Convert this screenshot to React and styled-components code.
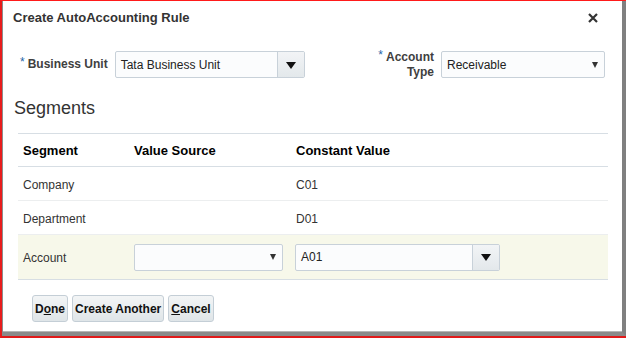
import React from "react";
import styled, { createGlobalStyle } from "styled-components";

const Global = createGlobalStyle`
  html, body { margin: 0; padding: 0; background: #fff; }
  body { font-family: "Liberation Sans", Arial, sans-serif; }
  * { box-sizing: border-box; }
`;

const Frame = styled.div`
  width: 626px;
  height: 338px;
  display: flex;
  border-top: 1px solid #ff1a1a;
  border-left: 2px solid #e81c1c;
  border-bottom: 2px solid #e01a1a;
`;

const Dialog = styled.div`
  flex: 1;
  display: flex;
  flex-direction: column;
  background: #fff;
  border-left: 1px solid #8c8c8c;
  border-right: 4px solid #808080;
  border-bottom: 4px solid #8a8a8a;
  box-shadow: inset 0 -1px 0 #b5b5b5;
  color: #333;
`;

const Header = styled.div`
  display: flex;
  align-items: center;
  justify-content: space-between;
  height: 33px;
  padding: 0 24px 0 10px;
`;

const Title = styled.div`
  font-size: 13px;
  font-weight: bold;
  color: #333;
`;

const Close = styled.svg`
  width: 10px;
  height: 10px;
  margin-top: 1px;
`;

const FormRow = styled.div`
  display: flex;
  justify-content: space-between;
  margin-top: 17px;
  padding: 0 17px 0 17px;
  height: 27px;
`;

const Field = styled.div`
  display: flex;
  align-items: center;
  gap: 7px;
`;

const Label = styled.div`
  display: flex;
  align-items: flex-start;
  font-size: 12px;
  font-weight: bold;
  color: #404040;
  text-align: right;
  line-height: 15px;
`;

const Star = styled.span`
  color: #1f65a8;
  font-size: 12px;
  font-weight: normal;
  margin-right: 3px;
  margin-top: -2px;
`;

const SelectBox = styled.div`
  display: flex;
  align-items: center;
  width: ${(p) => p.w}px;
  height: 27px;
  background: #fbfcfd;
  border: 1px solid #c8d1d9;
  border-radius: 2px;
  font-size: 12px;
  color: #222;
  overflow: hidden;
`;

const SelectText = styled.div`
  flex: 1;
  padding-left: 5px;
  white-space: nowrap;
`;

const SmallArrow = styled.div`
  width: 0;
  height: 0;
  border-left: 3px solid transparent;
  border-right: 3px solid transparent;
  border-top: 6px solid #333;
  margin-right: 6px;
`;

const DropButton = styled.div`
  width: 27px;
  height: 100%;
  display: flex;
  align-items: center;
  justify-content: center;
  border-left: 1px solid #c8d1d9;
  background: linear-gradient(#f2f4f6, #e3e8eb);
`;

const BigArrow = styled.div`
  width: 0;
  height: 0;
  border-left: 5px solid transparent;
  border-right: 5px solid transparent;
  border-top: 7px solid #111;
  margin-top: 1px;
`;

const Heading = styled.div`
  font-size: 18px;
  color: #333;
  margin: 20px 0 0 11px;
  line-height: 21px;
`;

const Table = styled.div`
  margin: 14px 0 0 15px;
  width: 590px;
`;

const Row = styled.div`
  display: grid;
  grid-template-columns: 111px 162px 1fr;
  align-items: center;
  height: ${(p) => p.h}px;
  border-top: 1px solid ${(p) => p.line};
  background: ${(p) => p.bg || "transparent"};
  ${(p) => p.last && "border-bottom: 1px solid #d7dee3;"}
`;

const Cell = styled.div`
  padding-left: 5px;
  font-size: ${(p) => (p.head ? 13 : 12)}px;
  font-weight: ${(p) => (p.head ? "bold" : "normal")};
  color: ${(p) => (p.head ? "#000" : "#333")};
  padding-top: ${(p) => (p.head ? 1 : 2)}px;
`;

const FieldCell = styled.div`
  padding-left: ${(p) => p.pl}px;
`;

const Buttons = styled.div`
  display: flex;
  gap: 4px;
  margin: 15px 0 0 29px;
`;

const Button = styled.div`
  height: 27px;
  padding: 0 2px;
  display: flex;
  align-items: center;
  font-size: 12px;
  font-weight: bold;
  color: #111;
  border: 1px solid #c4ced6;
  border-radius: 3px;
  background: linear-gradient(#f3f5f6, #dfe5e8);
  u { text-decoration: underline; }
`;

export default function App() {
  return (
    <>
      <Global />
      <Frame>
        <Dialog>
          <Header>
            <Title>Create AutoAccounting Rule</Title>
            <Close viewBox="0 0 10 10">
              <path d="M1 1 L9 9 M9 1 L1 9" stroke="#333" strokeWidth="2.2" />
            </Close>
          </Header>
          <FormRow>
            <Field>
              <Label>
                <Star>*</Star>Business Unit
              </Label>
              <SelectBox w={190}>
                <SelectText>Tata Business Unit</SelectText>
                <DropButton>
                  <BigArrow />
                </DropButton>
              </SelectBox>
            </Field>
            <Field>
              <Label>
                <Star>*</Star>
                <span>
                  Account
                  <br />
                  Type
                </span>
              </Label>
              <SelectBox w={164}>
                <SelectText>Receivable</SelectText>
                <SmallArrow />
              </SelectBox>
            </Field>
          </FormRow>
          <Heading>Segments</Heading>
          <Table>
            <Row h={33} line="#d7dee4">
              <Cell head>Segment</Cell>
              <Cell head>Value Source</Cell>
              <Cell head>Constant Value</Cell>
            </Row>
            <Row h={34} line="#d7dee4">
              <Cell>Company</Cell>
              <Cell />
              <Cell>C01</Cell>
            </Row>
            <Row h={34} line="#eceeef">
              <Cell>Department</Cell>
              <Cell />
              <Cell>D01</Cell>
            </Row>
            <Row h={46} line="#eceeef" bg="#f7f8ea" last>
              <Cell>Account</Cell>
              <FieldCell pl={5}>
                <SelectBox w={149}>
                  <SelectText />
                  <SmallArrow />
                </SelectBox>
              </FieldCell>
              <FieldCell pl={4}>
                <SelectBox w={205}>
                  <SelectText>A01</SelectText>
                  <DropButton>
                    <BigArrow />
                  </DropButton>
                </SelectBox>
              </FieldCell>
            </Row>
          </Table>
          <Buttons>
            <Button>
              D<u>o</u>ne
            </Button>
            <Button>Create Another</Button>
            <Button>
              <u>C</u>ancel
            </Button>
          </Buttons>
        </Dialog>
      </Frame>
    </>
  );
}
